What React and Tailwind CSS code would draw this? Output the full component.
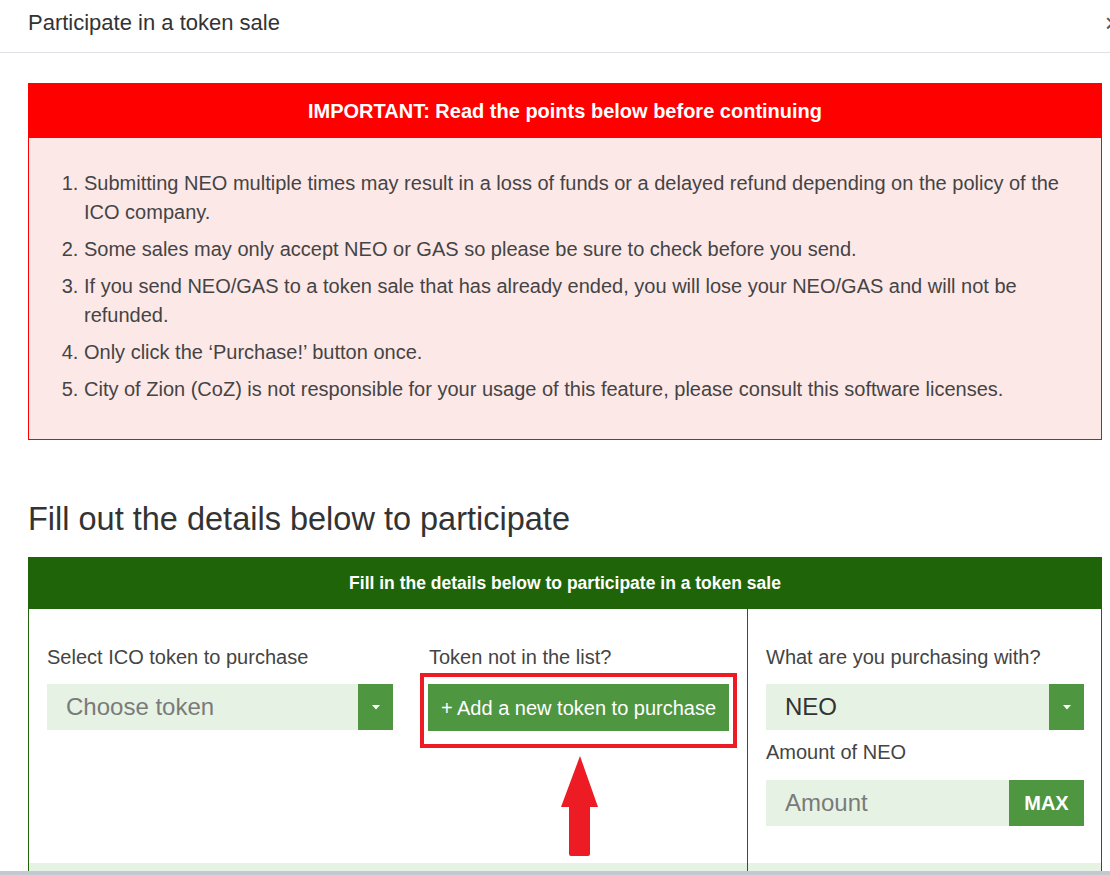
import React from "react";

function Caret() {
  return (
    <svg width="8" height="5" viewBox="0 0 8 5">
      <polygon points="0,0 8,0 4,4.5" fill="#ffffff" />
    </svg>
  );
}

function SelectBox({ value, placeholder }) {
  return (
    <div className="flex h-[46px] bg-[#e6f2e4]">
      <div
        className={
          "flex-1 flex items-center pl-[19px] text-[24px] " +
          (placeholder ? "text-[#7a7a7a]" : "text-[#333333]")
        }
      >
        {value}
      </div>
      <div className="w-[35px] bg-[#4e963f] flex items-center justify-center">
        <Caret />
      </div>
    </div>
  );
}

export default function App() {
  const items = [
    "Submitting NEO multiple times may result in a loss of funds or a delayed refund depending on the policy of the ICO company.",
    "Some sales may only accept NEO or GAS so please be sure to check before you send.",
    "If you send NEO/GAS to a token sale that has already ended, you will lose your NEO/GAS and will not be refunded.",
    "Only click the \u2018Purchase!\u2019 button once.",
    "City of Zion (CoZ) is not responsible for your usage of this feature, please consult this software licenses.",
  ];
  return (
    <div
      className="relative w-[1110px] h-[875px] overflow-hidden bg-white text-[#444444]"
      style={{ fontFamily: '"Liberation Sans", Arial, sans-serif' }}
    >
      {/* Modal header */}
      <div className="h-[53px] border-b border-[#dee2e6] flex items-center justify-between pl-[28px] pb-[6px]">
        <div className="text-[22px] text-[#333333] leading-none">Participate in a token sale</div>
        <div className="text-[26px] text-[#555555] leading-none mr-[-10px]">×</div>
      </div>

      <div className="px-[28px] pr-[8px]">
        {/* Important box */}
        <div className="mt-[30px] w-[1074px]">
          <div className="h-[55px] bg-[#ff0000] flex items-center justify-center text-white font-bold text-[20px]">
            IMPORTANT: Read the points below before continuing
          </div>
          <div className="bg-[#fde8e8] border border-t-0 border-[#ff0000] pt-[31px] h-[302px]">
            <ol className="list-decimal pl-[55px] pr-[30px] text-[20px] leading-[29px] text-[#444444] flex flex-col gap-[8px]">
              {items.map((t, i) => (
                <li key={i}>{t}</li>
              ))}
            </ol>
          </div>
        </div>

        {/* Heading */}
        <h2 className="mt-[61px] text-[32.5px] leading-[36px] text-[#333333]">
          Fill out the details below to participate
        </h2>

        {/* Form box */}
        <div className="mt-[20px] w-[1074px]">
          <div className="h-[52px] bg-[#206409] flex items-center justify-center text-white font-bold text-[17.5px]">
            Fill in the details below to participate in a token sale
          </div>
          <div className="border-l border-r border-[#206409] h-[300px] relative">
            <div className="flex h-[254px]">
              <div className="w-[719px] border-r border-[#206409] pl-[18px] pt-[37px]">
                <div className="grid grid-cols-[346px_301px] gap-x-[35px]">
                  <div>
                    <div className="text-[20px] leading-[22px] text-[#444444]">Select ICO token to purchase</div>
                    <div className="mt-[16px]">
                      <SelectBox value="Choose token" placeholder />
                    </div>
                  </div>
                  <div>
                    <div className="text-[20px] leading-[22px] text-[#444444] pl-[1px]">Token not in the list?</div>
                    <div className="mt-[16px] relative">
                      <button className="w-[301px] h-[47px] bg-[#4e963f] text-white text-[20px] flex items-center justify-center">
                        + Add a new token to purchase
                      </button>
                      {/* Annotation rectangle */}
                      <div className="absolute left-[-8px] top-[-11px] w-[317px] h-[75px] border-[4px] border-[#ed1c24]" />
                    </div>
                  </div>
                </div>
              </div>
              <div className="flex-1 pl-[18px] pr-[17px] pt-[37px]">
                <div className="text-[20px] leading-[22px] text-[#444444]">What are you purchasing with?</div>
                <div className="mt-[16px]">
                  <SelectBox value="NEO" />
                </div>
                <div className="mt-[11px] text-[20px] leading-[22px] text-[#444444]">Amount of NEO</div>
                <div className="mt-[17px] flex h-[46px]">
                  <div className="flex-1 bg-[#e6f2e4] flex items-center pl-[19px] text-[24px] text-[#7a7a7a]">
                    Amount
                  </div>
                  <div className="w-[75px] bg-[#4e963f] flex items-center justify-center text-white text-[20px] font-bold">
                    MAX
                  </div>
                </div>
              </div>
            </div>
            <div className="flex h-[40px] bg-[#e6f2e4]">
              <div className="w-[719px] border-r border-[#206409]" />
              <div className="flex-1" />
            </div>
          </div>
        </div>
      </div>

      {/* Red arrow annotation */}
      <svg className="absolute left-[555px] top-[752px]" width="50" height="108" viewBox="0 0 50 108">
        <path
          d="M25 4 L43 55 L35 55 L35 102 Q35 104 33 104 L16 104 Q14 104 14 102 L14 55 L6 55 Z"
          fill="#ed1c24"
        />
      </svg>

      {/* Bottom bar */}
      <div className="absolute left-0 bottom-0 w-full h-[4px] bg-[#c4c9d1]" />
    </div>
  );
}
